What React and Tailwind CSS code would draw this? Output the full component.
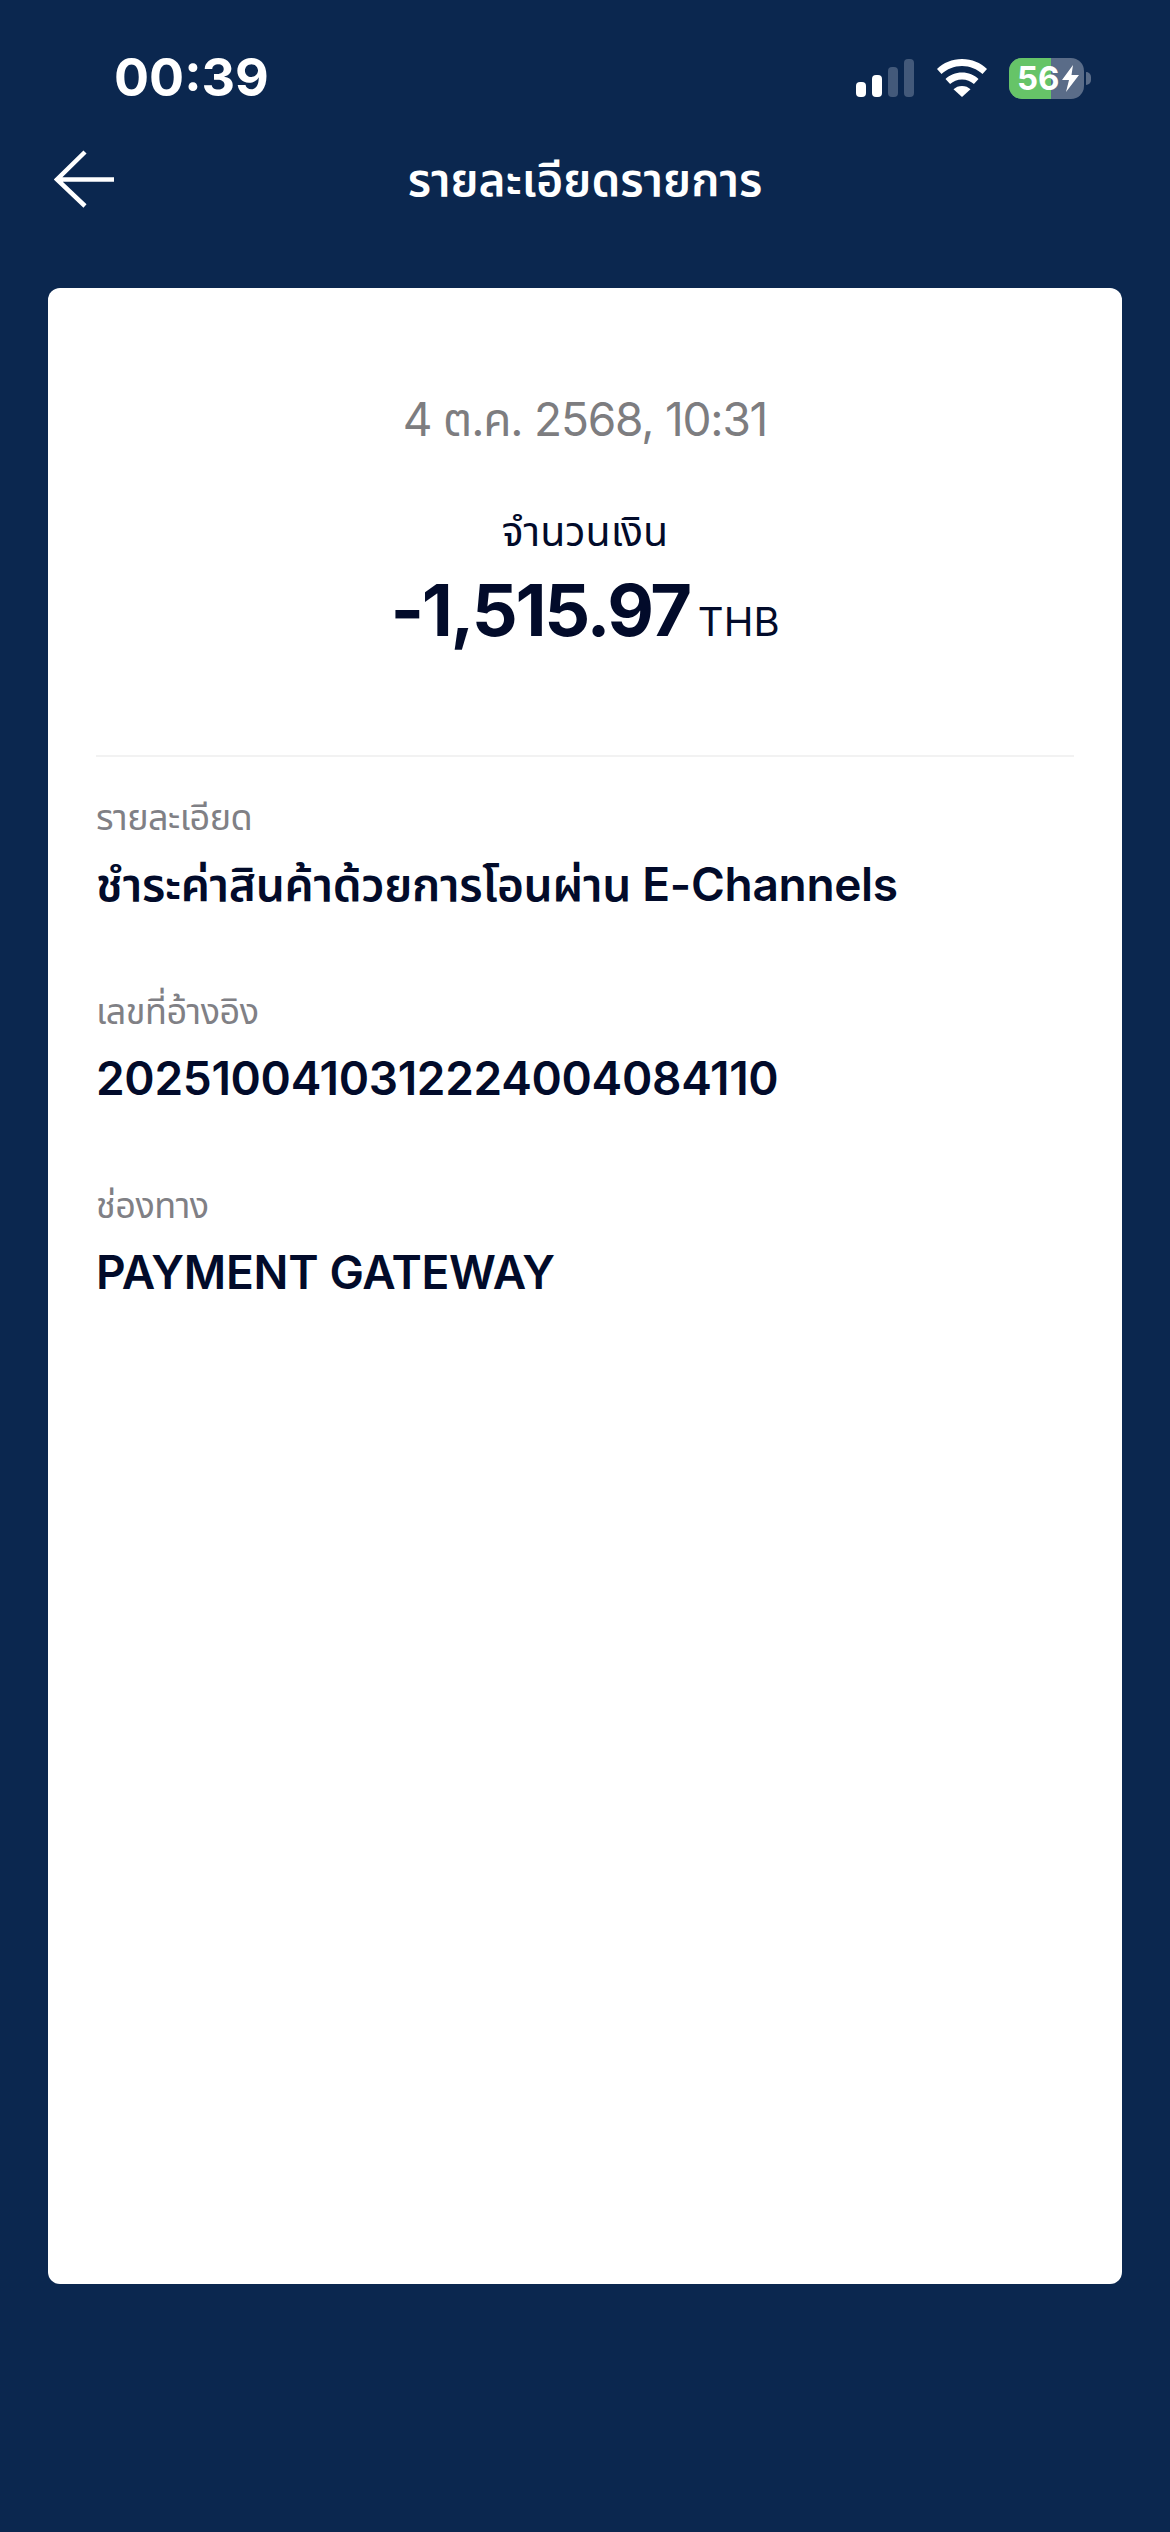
import React from "react";

const rows = [
  { label: "รายละเอียด", value: "ชำระค่าสินค้าด้วยการโอนผ่าน E-Channels" },
  { label: "เลขที่อ้างอิง", value: "2025100410312224004084110" },
  { label: "ช่องทาง", value: "PAYMENT GATEWAY" },
];

// signal bars, two lit and two dimmed
const SignalIcon = () => (
  <svg width="58" height="38" viewBox="0 0 58 38">
    <rect x="0" y="23" width="10" height="15" rx="4" fill="#fff" />
    <rect x="16" y="16" width="10" height="22" rx="4" fill="#fff" />
    <rect x="32" y="8" width="10" height="30" rx="4" fill="#43597a" />
    <rect x="48" y="0" width="10" height="38" rx="4" fill="#43597a" />
  </svg>
);

const WifiIcon = () => (
  <svg width="52" height="38" viewBox="0 0 52 38" fill="#fff">
    <path d="M26 0C16 0 7.500 3.800 1 10l4.500 5C11 10 18 7 26 7s15 3 20.500 8l4.500-5C44.500 3.800 36 0 26 0z" />
    <path d="M26 13.500c-6.500 0-12.300 2.400-16.500 6.500l4.600 5c3.100-2.900 7.200-4.600 11.900-4.600s8.800 1.700 11.900 4.600l4.600-5c-4.200-4.100-10-6.500-16.500-6.500z" />
    <path d="M26 27c-3.300 0-6.300 1.200-8.500 3.300L26 38l8.500-7.700C32.300 28.200 29.300 27 26 27z" />
  </svg>
);

const BatteryIcon = () => (
  <div className="flex items-center gap-[2px]">
    <div className="relative w-[75px] h-[41px] rounded-[13px] overflow-hidden bg-[#5a6c88]">
      <div className="h-full w-[42px] bg-[#66c468]"></div>
      <div className="absolute inset-0 flex items-center pl-[8px]">
        <span className="text-[33px] leading-none font-bold text-white">56</span>
        <svg width="17" height="27" viewBox="0 0 17 27" fill="#fff" className="ml-[2px]">
          <path d="M11 0 0 15h7l-3 12L17 10H9.500z" />
        </svg>
      </div>
    </div>
    <div className="w-[5px] h-[13px] rounded-r-full bg-[#5a6c88]"></div>
  </div>
);

const App = () => {
  return (
    <div className="w-full h-[2532px] flex flex-col bg-[#0b274f] font-['Inter','Noto_Sans_Thai','Noto_Sans',sans-serif]">
      {/* status bar */}
      <div className="flex items-center justify-between h-[78px] mt-[39px] pl-[114px] pr-[79px]">
        <span className="text-[52px] leading-none font-bold text-white">00:39</span>
        <div className="flex items-center">
          <SignalIcon />
          <div className="ml-[22px] mr-[21px]">
            <WifiIcon />
          </div>
          <BatteryIcon />
        </div>
      </div>

      {/* header */}
      <div className="flex items-center justify-between h-[66px] mt-[29px] px-[54px]">
        <svg width="60" height="58" viewBox="0 0 60 58" fill="none" stroke="#fff" strokeWidth="4.500" strokeLinejoin="miter">
          <path d="M31 2 3 29.500 31 56M3 29.500h57" />
        </svg>
        <h1 className="flex-1 text-center text-[46px] leading-none font-semibold text-white">รายละเอียดรายการ</h1>
        <div className="w-[60px]"></div>
      </div>

      {/* card */}
      <div className="mx-[48px] mt-[76px] h-[1996px] rounded-[12px] bg-white px-[48px] pt-[100px]">
        <div className="text-center text-[46px] leading-[62px] tracking-[-1.2px] text-[#7d7d80]">4 ต.ค. 2568, 10:31</div>
        <div className="mt-[56px] text-center text-[41px] leading-[50px] text-[#020b2a]">จำนวนเงิน</div>
        <div className="mt-[10px] flex items-baseline justify-center gap-[8px] text-[#020b2a]">
          <span className="text-[72px] leading-[88px] font-bold tracking-[-2.3px]">-1,515.97</span>
          <span className="text-[40px] leading-none">THB</span>
        </div>

        <div className="h-[2px] bg-[#f2f2f2] mt-[101px] mb-[37px]"></div>

        <div className="flex flex-col gap-[68px]">
          {rows.map((item) => (
            <div key={item.label}>
              <div className="text-[36px] leading-[46px] tracking-[-0.5px] text-[#808085]">{item.label}</div>
              <div className="mt-[8px] text-[46px] leading-[72px] font-semibold tracking-[-0.3px] text-[#020b2a]">{item.value}</div>
            </div>
          ))}
        </div>
      </div>
    </div>
  );
};

export default App;
